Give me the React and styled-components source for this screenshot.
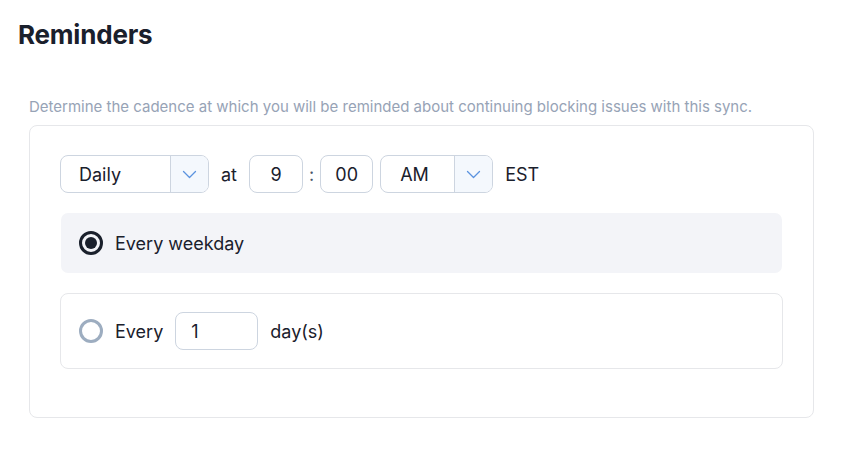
import React from "react";
import styled, { createGlobalStyle } from "styled-components";

const Global = createGlobalStyle`
  html, body { margin: 0; padding: 0; background: #ffffff; }
  body { font-family: Inter, "Noto Sans", sans-serif; color: #1a202c; }
  * { box-sizing: border-box; }
`;

const Page = styled.div`
  width: 846px;
  height: 460px;
  padding: 18px 32px 0 29px;
`;

const Title = styled.h1`
  margin: 0 0 0 -11px;
  font-size: 26px;
  line-height: 34px;
  font-weight: 700;
  color: #1a202c;
  letter-spacing: -0.2px;
`;

const Description = styled.p`
  margin: 45px 0 9px;
  font-size: 15px;
  line-height: 19px;
  color: #97a3b6;
`;

const Card = styled.div`
  border: 1px solid #e6e7ea;
  border-radius: 8px;
  padding: 29px 30px 48px 30px;
  display: flex;
  flex-direction: column;
  gap: 19px;
`;

const Row = styled.div`
  display: flex;
  align-items: center;
  gap: ${(p) => p.$gap || 12}px;
  font-size: 18px;
`;

const Select = styled.div`
  display: flex;
  height: 38px;
  width: ${(p) => p.$width}px;
  border: 1px solid #cdd5e0;
  border-radius: 8px;
  overflow: hidden;
  background: #ffffff;
`;

const SelectValue = styled.div`
  flex: 1;
  display: flex;
  align-items: center;
  padding-left: ${(p) => p.$pad || 18}px;
  font-size: 18px;
  color: #1a202c;
`;

const SelectToggle = styled.div`
  width: 38px;
  border-left: 1px solid #cdd5e0;
  background: #f4f8fd;
  display: flex;
  align-items: center;
  justify-content: center;
`;

const Field = styled.div`
  height: 38px;
  width: ${(p) => p.$width}px;
  border: 1px solid #cdd5e0;
  border-radius: 8px;
  display: flex;
  align-items: center;
  justify-content: ${(p) => (p.$left ? "flex-start" : "center")};
  padding-left: ${(p) => (p.$left ? "15px" : "0")};
  font-size: 18px;
  color: #1a202c;
  background: #ffffff;
`;

const Label = styled.span`
  font-size: 18px;
  color: #1a202c;
`;

const Colon = styled.span`
  font-size: 18px;
  color: #4a5568;
  margin: 0 -1px;
`;

const Option = styled.div`
  display: flex;
  align-items: center;
  gap: 12px;
  padding: 18px;
  border-radius: 8px;
  border: 1px solid ${(p) => (p.$selected ? "transparent" : "#e6e7ea")};
  background: ${(p) => (p.$selected ? "#f3f4f8" : "#ffffff")};
  background-clip: padding-box;
`;

const Radio = styled.span`
  width: 24px;
  height: 24px;
  border-radius: 50%;
  border: 3px solid ${(p) => (p.$checked ? "#1a202c" : "#9dadc0")};
  display: flex;
  align-items: center;
  justify-content: center;
  flex-shrink: 0;
  &::after {
    content: "";
    width: 12px;
    height: 12px;
    border-radius: 50%;
    background: #1a202c;
    display: ${(p) => (p.$checked ? "block" : "none")};
  }
`;

const Chevron = () => (
  <svg width="15" height="9" viewBox="0 0 15 9" fill="none">
    <path d="M1.5 1.5l6 6 6-6" stroke="#5b93df" strokeWidth="1.3" strokeLinecap="round" strokeLinejoin="round" />
  </svg>
);

export default function App() {
  return (
    <>
      <Global />
      <Page>
        <Title>Reminders</Title>
        <Description>
          Determine the cadence at which you will be reminded about continuing blocking issues with this sync.
        </Description>
        <Card>
          <Row>
            <Select $width={149}>
              <SelectValue>Daily</SelectValue>
              <SelectToggle>
                <Chevron />
              </SelectToggle>
            </Select>
            <Label>at</Label>
            <Row $gap={7}>
              <Field $width={54}>9</Field>
              <Colon>:</Colon>
              <Field $width={53}>00</Field>
              <Select $width={113}>
                <SelectValue $pad={19}>AM</SelectValue>
                <SelectToggle>
                  <Chevron />
                </SelectToggle>
              </Select>
            </Row>
            <Label>EST</Label>
          </Row>
          <Option $selected>
            <Radio $checked />
            <Label>Every weekday</Label>
          </Option>
          <Option>
            <Radio />
            <Label>Every</Label>
            <Field $width={83} $left>1</Field>
            <Label>day(s)</Label>
          </Option>
        </Card>
      </Page>
    </>
  );
}
